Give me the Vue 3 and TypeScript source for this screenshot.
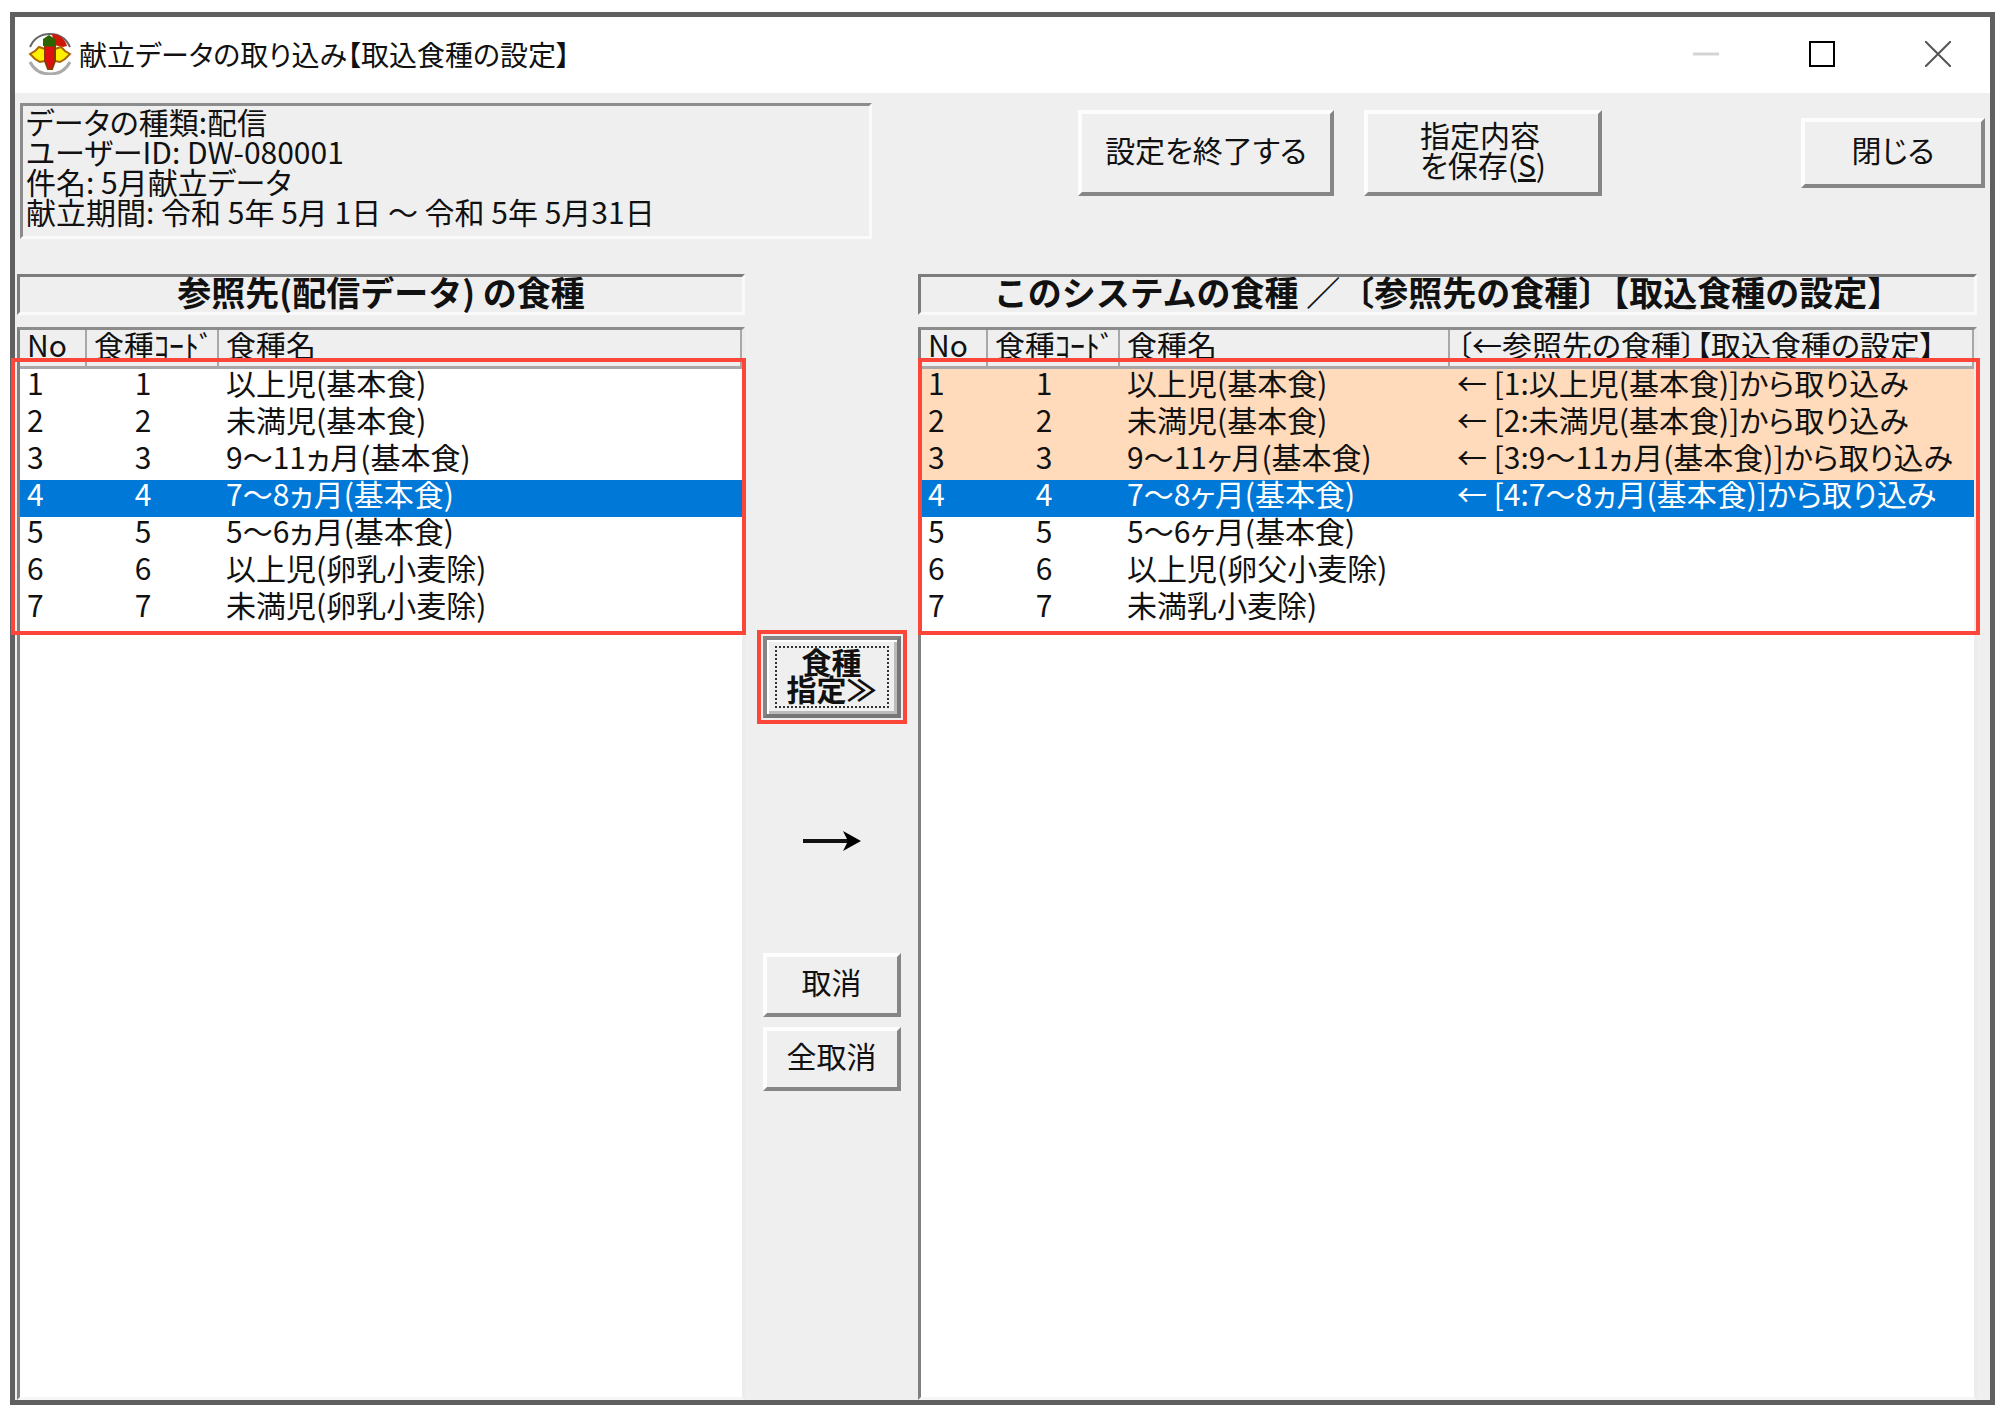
<script setup lang="ts">
import { ref } from 'vue'

interface SourceMeal {
  no: number
  code: number
  name: string
}

interface TargetMeal extends SourceMeal {
  from: string
}

const info: string[] = [
  'データの種類:配信',
  'ユーザーID: DW-080001',
  '件名: 5月献立データ',
  '献立期間: 令和 5年 5月 1日 ～ 令和 5年 5月31日',
]

const sources: SourceMeal[] = [
  { no: 1, code: 1, name: '以上児(基本食)' },
  { no: 2, code: 2, name: '未満児(基本食)' },
  { no: 3, code: 3, name: '9～11ヵ月(基本食)' },
  { no: 4, code: 4, name: '7～8ヵ月(基本食)' },
  { no: 5, code: 5, name: '5～6ヵ月(基本食)' },
  { no: 6, code: 6, name: '以上児(卵乳小麦除)' },
  { no: 7, code: 7, name: '未満児(卵乳小麦除)' },
]

const targets: TargetMeal[] = [
  { no: 1, code: 1, name: '以上児(基本食)', from: '[1:以上児(基本食)]から取り込み' },
  { no: 2, code: 2, name: '未満児(基本食)', from: '[2:未満児(基本食)]から取り込み' },
  { no: 3, code: 3, name: '9～11ヶ月(基本食)', from: '[3:9～11ヵ月(基本食)]から取り込み' },
  { no: 4, code: 4, name: '7～8ヶ月(基本食)', from: '[4:7～8ヵ月(基本食)]から取り込み' },
  { no: 5, code: 5, name: '5～6ヶ月(基本食)', from: '' },
  { no: 6, code: 6, name: '以上児(卵父小麦除)', from: '' },
  { no: 7, code: 7, name: '未満乳小麦除)', from: '' },
]

const selectedSource = ref(4)
const selectedTarget = ref(4)
</script>

<template>
  <div class="window">
    <header class="titlebar">
      <svg class="logo" viewBox="0 0 44 42" aria-hidden="true">
        <path d="M2 14C6 5 13 1 22 1s16 4 20 13" fill="none" stroke="#666" stroke-width="2" />
        <path d="M2 29c4 8 11 12 20 12s16-4 20-12" fill="none" stroke="#aaa" stroke-width="3" />
        <path d="M24 1c8 0 13 5 15 12l-4 1-9-2z" fill="#d01808" />
        <path d="M2 21l5-3 4-4 6 2v12l-5 1-5-3z" fill="#fff000" stroke="#a86400" stroke-width="2" />
        <path d="M42 21l-5-3-4-4-6 2v12l5 1 5-3z" fill="#fff000" stroke="#a86400" stroke-width="2" />
        <path d="M17 13h10v15l-3 8h-4l-3-8z" fill="#e01010" stroke="#8a3a00" stroke-width="2" />
        <path d="M15 6l6-4 6 4 1 7H15z" fill="#2c6400" />
      </svg>
      <h1 class="caption">献立データの取り込み【取込食種の設定】</h1>
      <div class="controls">
        <button class="control" type="button" aria-label="最小化" disabled>
          <svg viewBox="0 0 26 26"><path d="M0 13h26" stroke="#d4d4d4" stroke-width="3" /></svg>
        </button>
        <button class="control" type="button" aria-label="最大化">
          <svg viewBox="0 0 26 26"><path d="M1 1h24v24H1z" fill="none" stroke="#000" stroke-width="2" /></svg>
        </button>
        <button class="control" type="button" aria-label="ウィンドウを閉じる">
          <svg viewBox="0 0 26 26"><path d="M0 0l26 26M26 0L0 26" stroke="#555" stroke-width="2" /></svg>
        </button>
      </div>
    </header>

    <section class="top">
      <div class="info">
        <p v-for="line in info" :key="line">{{ line }}</p>
      </div>
      <div class="actions">
        <button class="btn finish" type="button">設定を終了する</button>
        <button class="btn save" type="button"><span>指定内容<br />を保存(<u>S</u>)</span></button>
        <button class="btn close" type="button">閉じる</button>
      </div>
    </section>

    <main class="lists">
      <section class="pane">
        <h2 class="banner">参照先(配信データ) の食種</h2>
        <div class="list">
          <table>
            <colgroup>
              <col class="c-no" />
              <col class="c-code" />
              <col />
            </colgroup>
            <thead>
              <tr><th>No</th><th>食種ｺｰﾄﾞ</th><th>食種名</th></tr>
            </thead>
            <tbody>
              <tr
                v-for="m in sources"
                :key="m.no"
                :class="{ selected: m.no === selectedSource }"
                @click="selectedSource = m.no"
              >
                <td>{{ m.no }}</td>
                <td class="code">{{ m.code }}</td>
                <td>{{ m.name }}</td>
              </tr>
            </tbody>
          </table>
          <div class="mark mark-source"></div>
        </div>
      </section>

      <div class="middle">
        <div class="assign-mark">
          <button class="btn assign" type="button"><span>食種<br />指定≫</span></button>
        </div>
        <svg class="arrow" viewBox="0 0 58 22" aria-hidden="true">
          <path d="M0 11h50" stroke="#111" stroke-width="4" />
          <path d="M58 11L40 1l5 10-5 10z" fill="#000" />
        </svg>
        <button class="btn cancel" type="button">取消</button>
        <button class="btn cancel" type="button">全取消</button>
      </div>

      <section class="pane">
        <h2 class="banner">このシステムの食種 ／〔参照先の食種〕【取込食種の設定】</h2>
        <div class="list">
          <table>
            <colgroup>
              <col class="c-no" />
              <col class="c-code" />
              <col class="c-name" />
              <col />
            </colgroup>
            <thead>
              <tr><th>No</th><th>食種ｺｰﾄﾞ</th><th>食種名</th><th>〔←参照先の食種〕【取込食種の設定】</th></tr>
            </thead>
            <tbody>
              <tr
                v-for="m in targets"
                :key="m.no"
                :class="{ assigned: m.from, selected: m.no === selectedTarget }"
                @click="selectedTarget = m.no"
              >
                <td>{{ m.no }}</td>
                <td class="code">{{ m.code }}</td>
                <td>{{ m.name }}</td>
                <td><template v-if="m.from">← {{ m.from }}</template></td>
              </tr>
            </tbody>
          </table>
          <div class="mark mark-target"></div>
        </div>
      </section>
    </main>
  </div>
</template>

<style>
body {
  margin: 0;
  background: #fff;
}
</style>

<style scoped>
* {
  box-sizing: border-box;
}

.window {
  display: flex;
  flex-direction: column;
  min-height: calc(100vh - 12px);
  margin: 12px 5px 0 10px;
  border: 5px solid #606060;
  background: #efefef;
  color: #111;
  font-family: 'Noto Sans CJK JP', sans-serif;
  font-size: 30px;
  line-height: 30px;
  font-feature-settings: 'palt';
  white-space: nowrap;
}

h1,
h2,
p {
  margin: 0;
}

.titlebar {
  display: flex;
  align-items: center;
  height: 76px;
  padding: 0 39px 3px 13px;
  background: #fff;
}

.logo {
  width: 44px;
  height: 42px;
}

.caption {
  flex: 1;
  margin-left: 7px;
  font-size: 28px;
  font-weight: 400;
}

.controls {
  display: flex;
  gap: 90px;
}

.control {
  width: 26px;
  height: 26px;
  padding: 0;
  border: 0;
  background: none;
}

.control svg {
  display: block;
}

.top {
  display: flex;
  align-items: flex-start;
  justify-content: space-between;
  height: 181px;
  padding: 10px 5px 0;
}

.info {
  width: 852px;
  height: 136px;
  padding: 0 3px;
  border: 3px solid;
  border-color: #8c8c8c #fafafa #fafafa #8c8c8c;
}

.actions {
  display: flex;
  align-items: center;
  padding-top: 7px;
}

.btn {
  padding: 0 0 8px;
  border: 4px solid;
  border-color: #fdfdfd #868686 #868686 #fdfdfd;
  background: #efefef;
  color: #111;
  font: inherit;
  font-feature-settings: inherit;
}

.btn span {
  display: inline-block;
  text-align: left;
}

.finish {
  width: 256px;
  height: 86px;
}

.save {
  width: 238px;
  height: 86px;
  margin-left: 30px;
}

.close {
  width: 184px;
  height: 70px;
  margin-left: 199px;
}

.lists {
  flex: 1;
  display: grid;
  grid-template-columns: 728fr 173px 1059fr;
  padding: 0 13px 0 2px;
}

.pane {
  display: flex;
  flex-direction: column;
  min-width: 0;
}

.banner {
  height: 41px;
  margin-bottom: 12px;
  border: 3px solid;
  border-color: #7c7c7c #fafafa #fafafa #7c7c7c;
  font-size: 34px;
  line-height: 30px;
  font-weight: 700;
  font-feature-settings: normal;
  text-align: center;
}

.list {
  position: relative;
  flex: 1;
  border: 3px solid;
  border-color: #8c8c8c #ececec #f6f6f6 #808080;
  background: #fff;
}

table {
  width: 100%;
  border-collapse: separate;
  border-spacing: 0;
  table-layout: fixed;
}

.c-no {
  width: 67px;
}

.c-code {
  width: 132px;
}

.c-name {
  width: 330px;
}

th,
td {
  height: 37px;
  padding: 0 0 10px 7px;
  line-height: 27px;
  text-align: left;
  font-weight: 400;
}

th {
  height: 39px;
  padding-bottom: 7px;
  border-right: 2px solid #a8a8a8;
  border-bottom: 3px solid #a8a8a8;
  background: #efefef;
}

.code {
  padding-right: 20px;
  padding-left: 0;
  text-align: center;
}

.assigned {
  background: #ffdbbb;
}

.selected {
  background: #0078d7;
  color: #fff;
}

.mark {
  position: absolute;
  top: 28px;
  height: 277px;
  border: 4px solid #fb4639;
  pointer-events: none;
}

.mark-source {
  right: -4px;
  left: -9px;
}

.mark-target {
  right: -6px;
  left: -3px;
}

.middle {
  display: flex;
  flex-direction: column;
  align-items: center;
  padding-top: 356px;
}

.assign-mark {
  border: 4px solid #fb4639;
  padding: 2px;
}

.assign {
  display: block;
  width: 138px;
  height: 82px;
  padding: 4px;
  border: 4px solid;
  border-color: #858585 #777 #777 #858585;
  box-shadow: inset 2px 2px #fff, inset -3px -3px #bbb;
  font-weight: 700;
  line-height: 27px;
}

.assign span {
  display: block;
  height: 62px;
  margin: 0 4px;
  border: 2px dotted #333;
  text-align: center;
}

.arrow {
  width: 58px;
  height: 22px;
  margin: 106px 0 101px;
}

.cancel {
  width: 138px;
  height: 64px;
  margin-bottom: 10px;
}
</style>
